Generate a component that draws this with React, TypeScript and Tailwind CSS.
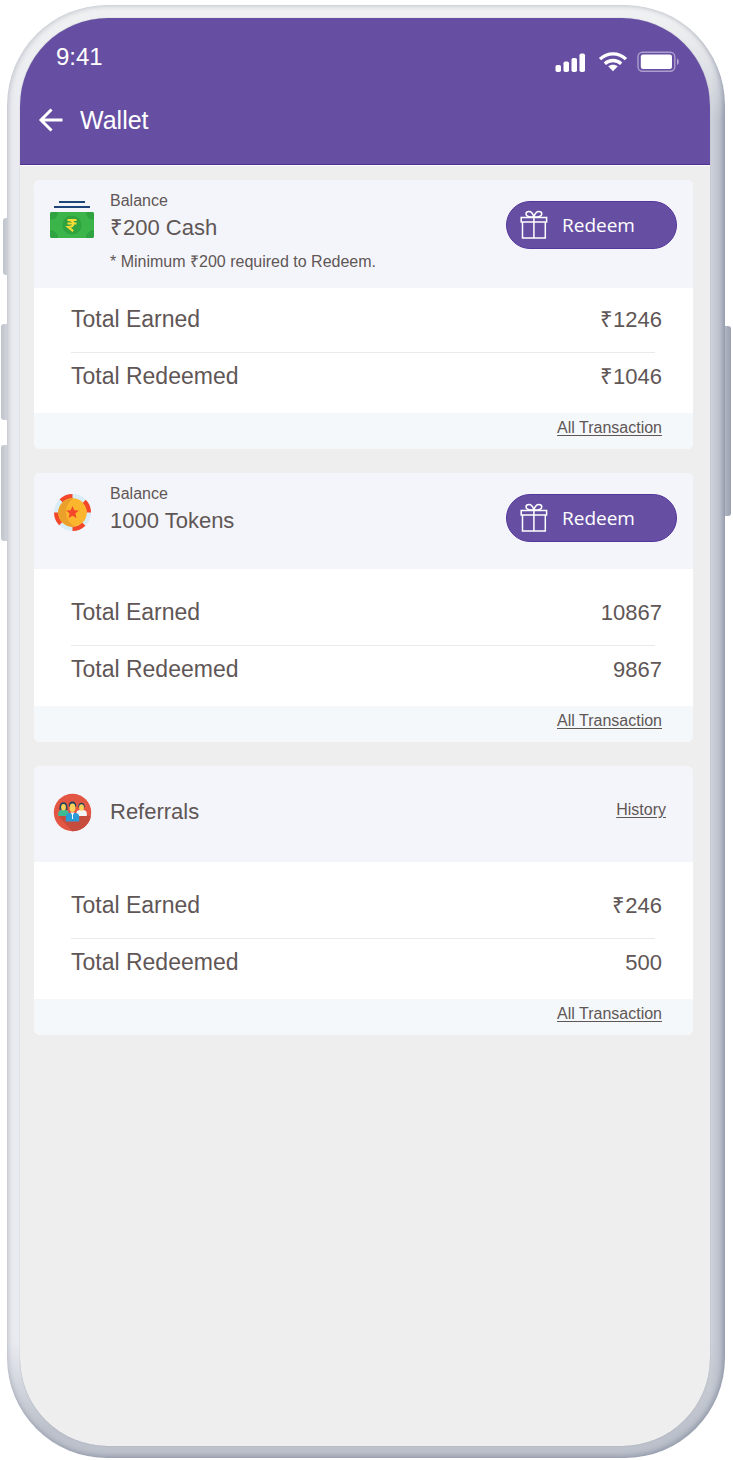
import type { ReactNode } from 'react'

type Stat = { label: string; value: string }

export default function App() {
  return (
    <div className="flex min-h-screen bg-white pt-[5px] pr-2 pb-0.5 pl-[7px] font-['Liberation_Sans',Arial,sans-serif] text-[#5f5656]">
      <PhoneFrame>
        <AppHeader title="Wallet" />
        <main className="flex flex-col gap-6 pt-[15px] pr-[17px] pb-6 pl-3.5">
          <WalletCard
            stats={[
              { label: 'Total Earned', value: '₹1246' },
              { label: 'Total Redeemed', value: '₹1046' },
            ]}
            header={
              <BalanceHeader
                icon={<CashIcon />}
                amount="₹200 Cash"
                note="* Minimum ₹200 required to Redeem."
              />
            }
          />
          <WalletCard
            roomy
            stats={[
              { label: 'Total Earned', value: '10867' },
              { label: 'Total Redeemed', value: '9867' },
            ]}
            header={<BalanceHeader icon={<TokenIcon />} amount="1000 Tokens" />}
          />
          <WalletCard
            roomy
            stats={[
              { label: 'Total Earned', value: '₹246' },
              { label: 'Total Redeemed', value: '500' },
            ]}
            header={
              <div className="flex min-h-24 items-center gap-4 bg-[#f4f5fa] pr-[27px] pb-1 pl-4">
                <ReferralIcon />
                <h2 className="flex-1 text-[22px] leading-[34px]">Referrals</h2>
                <TextLink className="pb-1">History</TextLink>
              </div>
            }
          />
        </main>
      </PhoneFrame>
    </div>
  )
}

function PhoneFrame({ children }: { children: ReactNode }) {
  return (
    <div className="relative flex flex-1">
      <span className="absolute top-[213px] -left-1 h-[57px] w-3 rounded-[3px] bg-linear-to-r from-[#bfc3cb] to-[#e2e4e9]" />
      <span className="absolute top-[319px] -left-1.5 h-24 w-3 rounded-[3px] bg-linear-to-r from-[#bfc3cb] to-[#e2e4e9]" />
      <span className="absolute top-[440px] -left-1.5 h-24 w-3 rounded-[3px] bg-linear-to-r from-[#bfc3cb] to-[#e2e4e9]" />
      <span className="absolute top-[321px] -right-1.5 h-[190px] w-3 rounded-[3px] bg-linear-to-r from-[#c3c7d1] to-[#9ba1b0]" />
      <div className="relative flex flex-1 rounded-[100px] bg-[linear-gradient(to_bottom,#eef0f1_1%,transparent_8%,transparent_92%,#bcc1cb_98%),linear-gradient(to_right,#e9ebf0_80%,#cdd1d9_98%,#b4b9c6)] pt-[13px] pr-[15px] pb-3 pl-[13px] shadow-[inset_-2px_-2px_5px_rgba(110,119,142,0.5),inset_2px_1px_5px_rgba(160,166,178,0.4)]">
        <div className="flex-1 overflow-hidden rounded-[88px] bg-[#eeeeee] shadow-[0_0_1px_#8f96a5]">
          {children}
        </div>
      </div>
    </div>
  )
}

function AppHeader({ title }: { title: string }) {
  return (
    <header className="border-b border-[#50318f] bg-[#664fa3] pt-6 pb-7 text-white shadow-[0_1px_0_white]">
      <div className="flex h-[30px] items-end justify-between pr-[31px] pl-9">
        <span className="text-2xl leading-[30px]">9:41</span>
        <StatusIcons />
      </div>
      <div className="mt-8 flex h-8 items-center gap-4 pl-[18px]">
        <button type="button" aria-label="Back">
          <svg width="26" height="26" viewBox="0 0 26 26" fill="none">
            <path
              d="M13.5 2.5 3 13l10.5 10.5M3 13h21.5"
              stroke="currentColor"
              strokeWidth="3"
            />
          </svg>
        </button>
        <h1 className="text-[25px] leading-8">{title}</h1>
      </div>
    </header>
  )
}

function WalletCard({
  header,
  stats,
  roomy,
}: {
  header: ReactNode
  stats: Stat[]
  roomy?: boolean
}) {
  return (
    <section className="overflow-hidden rounded-md bg-white">
      {header}
      <dl
        className={
          roomy
            ? 'pt-3 pr-[31px] pb-3 pl-[37px] text-[22px]'
            : 'pr-[31px] pb-3 pl-[37px] text-[22px]'
        }
      >
        {stats.map((stat, index) => (
          <div key={stat.label}>
            {index > 0 && <div className="mr-[7px] h-px bg-[#e8ebee]" />}
            <div
              className={
                index > 0
                  ? 'flex h-12 items-center justify-between pb-0.5'
                  : 'flex h-16 items-center justify-between pb-0.5'
              }
            >
              <dt className="text-[23px]">{stat.label}</dt>
              <dd>{stat.value}</dd>
            </div>
          </div>
        ))}
      </dl>
      <div className="flex h-9 justify-end bg-[#f4f8fb] pt-[5px] pr-[31px]">
        <TextLink>All Transaction</TextLink>
      </div>
    </section>
  )
}

function BalanceHeader({
  icon,
  amount,
  note,
}: {
  icon: ReactNode
  amount: string
  note?: string
}) {
  return (
    <div className="flex min-h-24 items-start gap-4 bg-[#f4f5fa] pt-[11px] pr-4 pb-4 pl-4">
      <div className="pt-[7px]">{icon}</div>
      <div className="flex-1">
        <p className="text-base leading-5">Balance</p>
        <h2 className="text-[22px] leading-[34px]">{amount}</h2>
        {note && <p className="mt-[7px] text-base leading-5">{note}</p>}
      </div>
      <RedeemButton />
    </div>
  )
}

function RedeemButton() {
  return (
    <button
      type="button"
      className="mt-2.5 flex h-12 w-[171px] items-center gap-3.5 rounded-full border border-[#54379a] bg-[#664fa3] pl-[13px] font-['Open_Sans','Noto_Sans',sans-serif] text-[19px] text-white"
    >
      <GiftIcon />
      Redeem
    </button>
  )
}

function TextLink({
  children,
  className = '',
}: {
  children: ReactNode
  className?: string
}) {
  return (
    <a
      href="#"
      className={`text-base leading-5 underline underline-offset-2 ${className}`}
    >
      {children}
    </a>
  )
}

function StatusIcons() {
  return (
    <svg width="124" height="21" viewBox="0 0 124 21" fill="none">
      <g fill="white">
        <rect x="0.5" y="14" width="5.5" height="7" rx="1.8" />
        <rect x="8.5" y="10.5" width="5.5" height="10.5" rx="1.8" />
        <rect x="16.5" y="7" width="5.5" height="14" rx="1.8" />
        <rect x="24.5" y="2.5" width="5.5" height="18.5" rx="1.8" />
        <path d="m58 20.2-4.8-4.9c2.6-2.2 7-2.2 9.6 0z" />
      </g>
      <path
        d="M45 8.1c7.5-7 18.5-7 26 0M49.8 12.7c4.8-4.3 11.6-4.3 16.4 0"
        stroke="white"
        strokeWidth="3.3"
      />
      <rect
        x="83"
        y="1.2"
        width="36.8"
        height="19"
        rx="4.5"
        stroke="white"
        strokeOpacity="0.45"
        strokeWidth="1.4"
      />
      <rect x="85.8" y="3.6" width="31.200" height="14.4" rx="2.2" fill="white" />
      <path d="M122 7.5c2.4 1 2.4 5.4 0 6.4z" fill="white" fillOpacity="0.5" />
    </svg>
  )
}

function GiftIcon() {
  return (
    <svg
      width="28"
      height="30"
      viewBox="0 0 28 30"
      fill="none"
      stroke="white"
      strokeWidth="1.5"
    >
      <path d="M1.200 7.500h25.400v4.500H1.200zM2.500 12v16h22.800v-16M13.900 7.500v20.500" />
      <path d="M13.900 7C9.500 7.200 6 6.300 6 4c0-1.400 1.300-2.400 3-2.400 2.400 0 4 2.400 4.900 5.400zM13.900 7c4.400.2 7.900-.7 7.900-3 0-1.400-1.300-2.400-3-2.400-2.400 0-4 2.400-4.900 5.400z" />
    </svg>
  )
}

function CashIcon() {
  return (
    <svg width="44" height="44" viewBox="0 0 44 44">
      <path d="M9 4h26M4 9h36" stroke="#1d4578" strokeWidth="2" />
      <rect y="14" width="44" height="26" rx="2" fill="#3bb54a" />
      <g fill="#2ea340">
        <path d="M2 14h6q0 7-8 8v-6q0-2 2-2zM42 14h-6q0 7 8 8v-6q0-2-2-2zM2 40h6q0-7-8-8v6q0 2 2 2zM42 40h-6q0-7 8-8v6q0 2-2 2z" />
        <circle cx="22" cy="27" r="9.6" />
      </g>
      <path
        d="M17.500 21.900h9M17.500 25.400h9M18 21.900c7.200 0 7.200 7 0 7l5.200 4.200"
        fill="none"
        stroke="#fbdc35"
        strokeWidth="2"
      />
    </svg>
  )
}

function TokenIcon() {
  return (
    <svg width="44" height="44" viewBox="0 0 44 44">
      <circle cx="22.5" cy="21.5" r="16.2" fill="#fbb62e" stroke="#d8edf7" strokeWidth="4.6" />
      {/* red chip segments */}
      <path
        d="M11.2 9.9A16.2 16.2 0 0 1 22.5 5.3M34.2 10.3A16.2 16.2 0 0 1 38.7 21.5M33.8 33.1A16.2 16.2 0 0 1 22.5 37.7M10.8 32.7A16.2 16.2 0 0 1 6.3 21.5"
        fill="none"
        stroke="#f4472a"
        strokeWidth="4.6"
      />
      <circle cx="22.5" cy="21.5" r="14.3" fill="#fbb62e" />
      <path d="M22.5 7.2a14.3 14.3 0 0 0 0 28.6q1.2 0 2.2-.2a16.5 16.5 0 0 1-1.2-28.4z" fill="#eca02c" />
      <path
        d="m22.5 15 1.8 4.2 4.5.4-3.4 3 1 4.4-3.9-2.3-3.9 2.3 1-4.4-3.4-3 4.5-.4z"
        fill="#f4472a"
      />
    </svg>
  )
}

function ReferralIcon() {
  return (
    <svg width="44" height="44" viewBox="0 0 44 44">
      <circle cx="22.5" cy="22.5" r="18.7" fill="#e25643" />
      <path d="m8.5 26 13.8 15.2a18.7 18.7 0 0 0 18.6-14.7L37 25z" fill="#c64c3e" />
      {/* side figures */}
      <path d="M8.2 26v-3q.2-2.4 3-3h4.6q2.8.6 3 3v3z" fill="#3dba91" />
      <path d="M26.2 26v-3q.2-2.4 3-3h4.6q2.8.6 3 3v3z" fill="#f3f5f5" />
      <path d="M9.3 19.8c.6-2-.4-7.5 4.2-7.5s3.6 5.5 4.2 7.5z" fill="#23435b" />
      <path d="M28.3 17.5c-.8-6.5 7.2-6.5 6.4 0z" fill="#23435b" />
      <ellipse cx="13.5" cy="17.3" rx="2.4" ry="3.2" fill="#fbd15c" />
      <ellipse cx="31.5" cy="17.5" rx="2.4" ry="3.2" fill="#fbd15c" />
      {/* centre figure */}
      <path d="M15.8 31.500v-4.800q.2-3 3.200-3.700h7q3 .7 3.200 3.700v4.800z" fill="#2a9bd7" />
      <path d="m20.500 22.500 2 3 2-3z" fill="white" />
      <path d="M22.500 24.500v4.500" stroke="white" strokeWidth="1" />
      <path d="M18.900 17c-1.300-7.500 8.500-7.500 7.200 0z" fill="#23435b" />
      <ellipse cx="22.500" cy="17.800" rx="2.900" ry="4.300" fill="#fbd15c" />
    </svg>
  )
}
